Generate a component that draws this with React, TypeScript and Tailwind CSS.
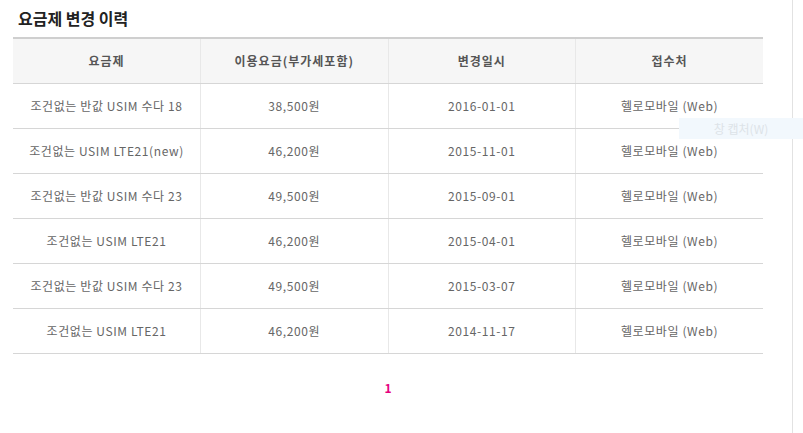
const rows = [
  ["조건없는 반값 USIM 수다 18", "38,500원", "2016-01-01", "헬로모바일 (Web)"],
  ["조건없는 USIM LTE21(new)", "46,200원", "2015-11-01", "헬로모바일 (Web)"],
  ["조건없는 반값 USIM 수다 23", "49,500원", "2015-09-01", "헬로모바일 (Web)"],
  ["조건없는 USIM LTE21", "46,200원", "2015-04-01", "헬로모바일 (Web)"],
  ["조건없는 반값 USIM 수다 23", "49,500원", "2015-03-07", "헬로모바일 (Web)"],
  ["조건없는 USIM LTE21", "46,200원", "2014-11-17", "헬로모바일 (Web)"],
];

const headers = ["요금제", "이용요금(부가세포함)", "변경일시", "접수처"];

export default function App() {
  return (
    <div
      className="relative flex h-[433px] w-[803px] overflow-hidden bg-white"
      style={{ fontFamily: '"Noto Sans CJK KR", "Liberation Sans", sans-serif' }}
    >
      <div className="w-[792px] pl-[13px] pr-[29px]">
        <h2 className="mt-[6px] h-[31px] pl-[5px] text-[16px] font-bold leading-[24px] text-[#222]">
          요금제 변경 이력
        </h2>
        <table className="w-[750px] table-fixed border-collapse border-t-2 border-[#cfcfcf]">
          <thead>
            <tr className="h-[45px] bg-[#f6f6f6]">
              {headers.map((h, i) => (
                <th
                  key={h}
                  className={`border-b border-[#d6d6d6] text-[12px] font-bold tracking-[1px] text-[#555] ${
                    i > 0 ? "border-l border-l-[#e8e8e8]" : ""
                  }`}
                >
                  {h}
                </th>
              ))}
            </tr>
          </thead>
          <tbody>
            {rows.map((r, ri) => (
              <tr key={ri} className="h-[45px]">
                {r.map((c, i) => (
                  <td
                    key={i}
                    className={`border-b border-[#d6d6d6] text-center text-[12px] tracking-[0.6px] text-[#666] ${
                      i > 0 ? "border-l border-l-[#e8e8e8]" : ""
                    }`}
                  >
                    {c}
                  </td>
                ))}
              </tr>
            ))}
          </tbody>
        </table>
        <div className="mt-[27px] flex justify-center">
          <span className="text-[12px] font-bold leading-[14px] text-[#e6007e]">1</span>
        </div>
      </div>
      <div className="h-full w-px bg-[#e2e2e2]" />
      <div className="absolute left-[679px] top-[118px] flex h-[21px] w-[124px] items-center justify-center bg-[#f2f8fd] text-[12px] text-[#dde3e8]">
        창 캡처(W)
      </div>
    </div>
  );
}
